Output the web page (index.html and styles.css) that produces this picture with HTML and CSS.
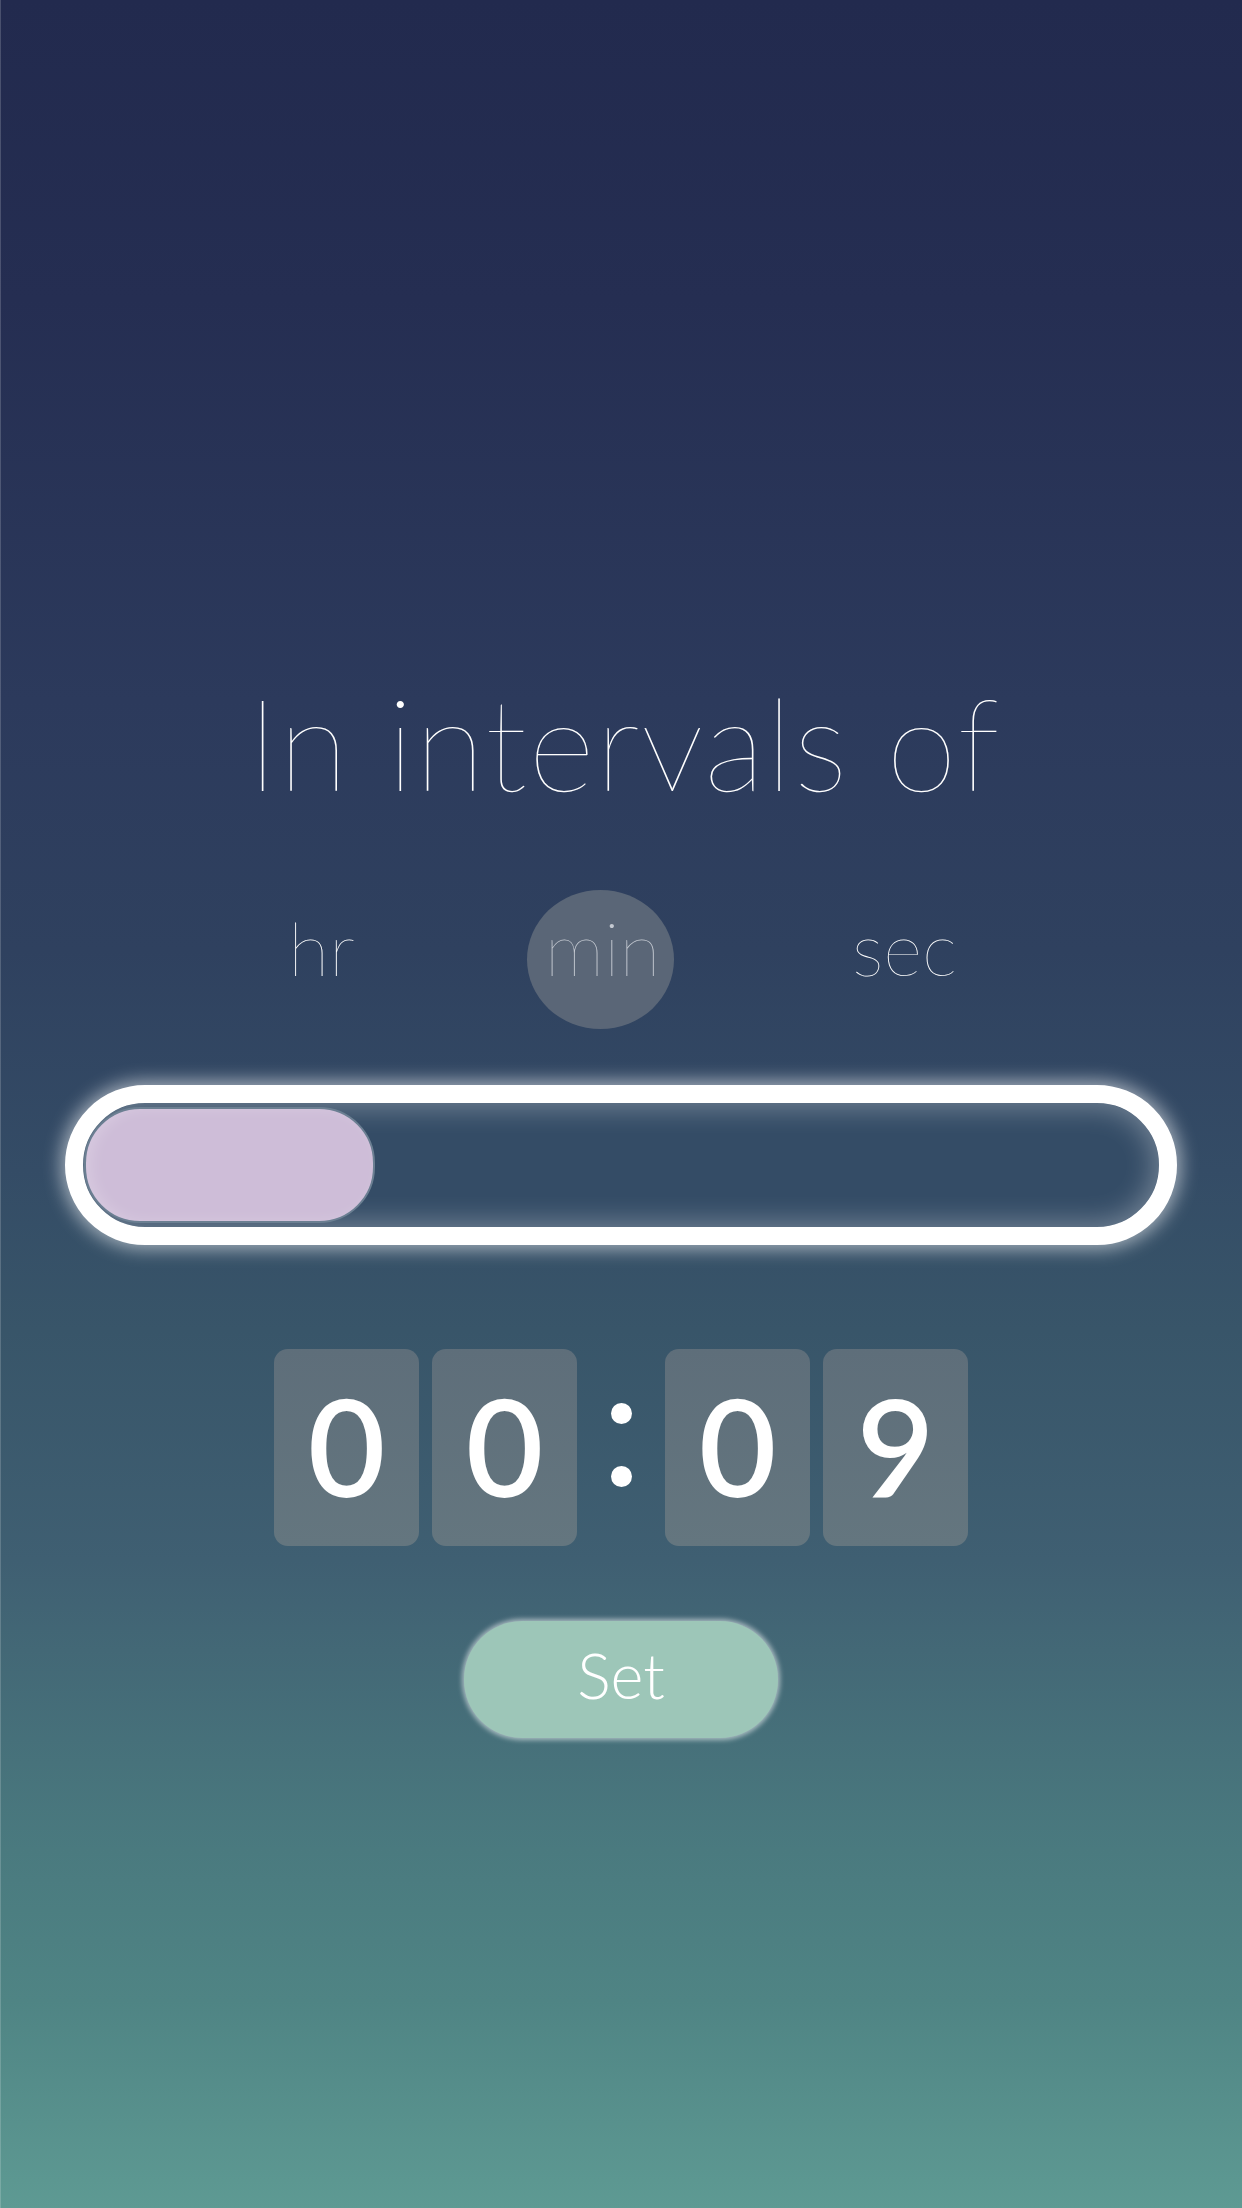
FILE: index.html
```html
<!DOCTYPE html>
<html lang="en">
<head>
<meta charset="utf-8">
<title>Intervals</title>
<link rel="stylesheet" href="styles.css">
</head>
<body>
<main class="screen">
  <h1 class="title">In intervals of</h1>

  <div class="units">
    <div class="unit unit-hr">hr</div>
    <div class="unit unit-min unit-active"><span class="unit-label">min</span></div>
    <div class="unit unit-sec">sec</div>
  </div>

  <div class="track">
    <div class="fill"></div>
  </div>

  <div class="clock">
    <div class="digit">0</div>
    <div class="digit">0</div>
    <div class="colon"><span class="dot"></span><span class="dot"></span></div>
    <div class="digit">0</div>
    <div class="digit">9</div>
  </div>

  <button class="set-btn" type="button">Set</button>
</main>
</body>
</html>
```

FILE: styles.css
```css
html, body {
  margin: 0;
  padding: 0;
}

body {
  width: 1242px;
  height: 2208px;
  overflow: hidden;
  font-family: Lato, "Open Sans", "Liberation Sans", sans-serif;
  color: #ffffff;
  background: linear-gradient(180deg,
    #222a4e 0px,
    #252e52 300px,
    #2c3a5c 700px,
    #2f415f 950px,
    #344c66 1170px,
    #385569 1330px,
    #3f5f72 1560px,
    #436876 1650px,
    #4a7a7f 1850px,
    #4f8484 2000px,
    #5e9a93 2208px);
}

.screen {
  box-sizing: border-box;
  height: 2208px;
  padding-top: 678px;
  display: flex;
  flex-direction: column;
  align-items: center;
  box-shadow: inset 1px 0 0 rgba(255, 255, 255, 0.18);
}

.title {
  margin: 0;
  font-size: 128px;
  line-height: 128px;
  font-weight: 200;
  letter-spacing: 1.3px;
  white-space: nowrap;
  padding-left: 6px;
}

.units {
  margin-top: 84px;
  height: 139px;
  display: flex;
  gap: 200px;
  padding-left: 5px;
}

.unit {
  position: relative;
  box-sizing: border-box;
  height: 139px;
  padding-bottom: 25px;
  display: flex;
  align-items: center;
  justify-content: center;
  white-space: nowrap;
  font-size: 75px;
  line-height: 75px;
  font-weight: 200;
  color: #ffffff;
}

.unit-hr { width: 54px; }
.unit-min { width: 108px; }
.unit-sec { width: 96px; }

.unit-active {
  color: #c4c9d1;
}

.unit-active::before {
  content: "";
  position: absolute;
  top: 0;
  left: 50%;
  width: 147px;
  height: 139px;
  margin-left: -76px;
  border-radius: 50%;
  background: #5a6677;
}

.unit-label {
  position: relative;
  z-index: 1;
}

.track {
  margin-top: 56px;
  box-sizing: border-box;
  width: 1112px;
  height: 160px;
  border: 18px solid #ffffff;
  border-radius: 80px;
  padding: 4px 1px;
  background: #344c66;
  box-shadow:
    0 0 18px 4px rgba(255, 255, 255, 0.55),
    inset 0 0 28px 4px rgba(255, 255, 255, 0.32);
}

.fill {
  box-sizing: border-box;
  width: 291px;
  height: 116px;
  border: 2px solid #6b7f92;
  border-radius: 56px;
  background: #cebdd8;
  box-shadow: inset 6px 0 14px rgba(255, 255, 255, 0.18);
}

.clock {
  margin-top: 104px;
  display: flex;
  gap: 13px;
  height: 197px;
}

.digit {
  width: 145px;
  height: 197px;
  border-radius: 14px;
  background: linear-gradient(180deg, #5e6e7a, #64767f);
  text-align: center;
  font-size: 134px;
  line-height: 193px;
  font-weight: 600;
  color: #ffffff;
}

.colon {
  width: 62px;
  height: 197px;
  box-sizing: border-box;
  padding-bottom: 6px;
  display: flex;
  flex-direction: column;
  align-items: center;
  justify-content: center;
  gap: 42px;
}

.dot {
  width: 21px;
  height: 21px;
  border-radius: 50%;
  background: #ffffff;
}

.set-btn {
  margin-top: 75px;
  width: 314px;
  height: 117px;
  border: none;
  border-radius: 58px;
  background: #9dc6b8;
  box-shadow: 0 0 5px 2px rgba(255, 255, 255, 0.55);
  font-family: Lato, "Open Sans", "Liberation Sans", sans-serif;
  font-size: 63px;
  font-weight: 300;
  line-height: 63px;
  color: #ffffff;
  padding: 0 0 10px 0;
}
```
